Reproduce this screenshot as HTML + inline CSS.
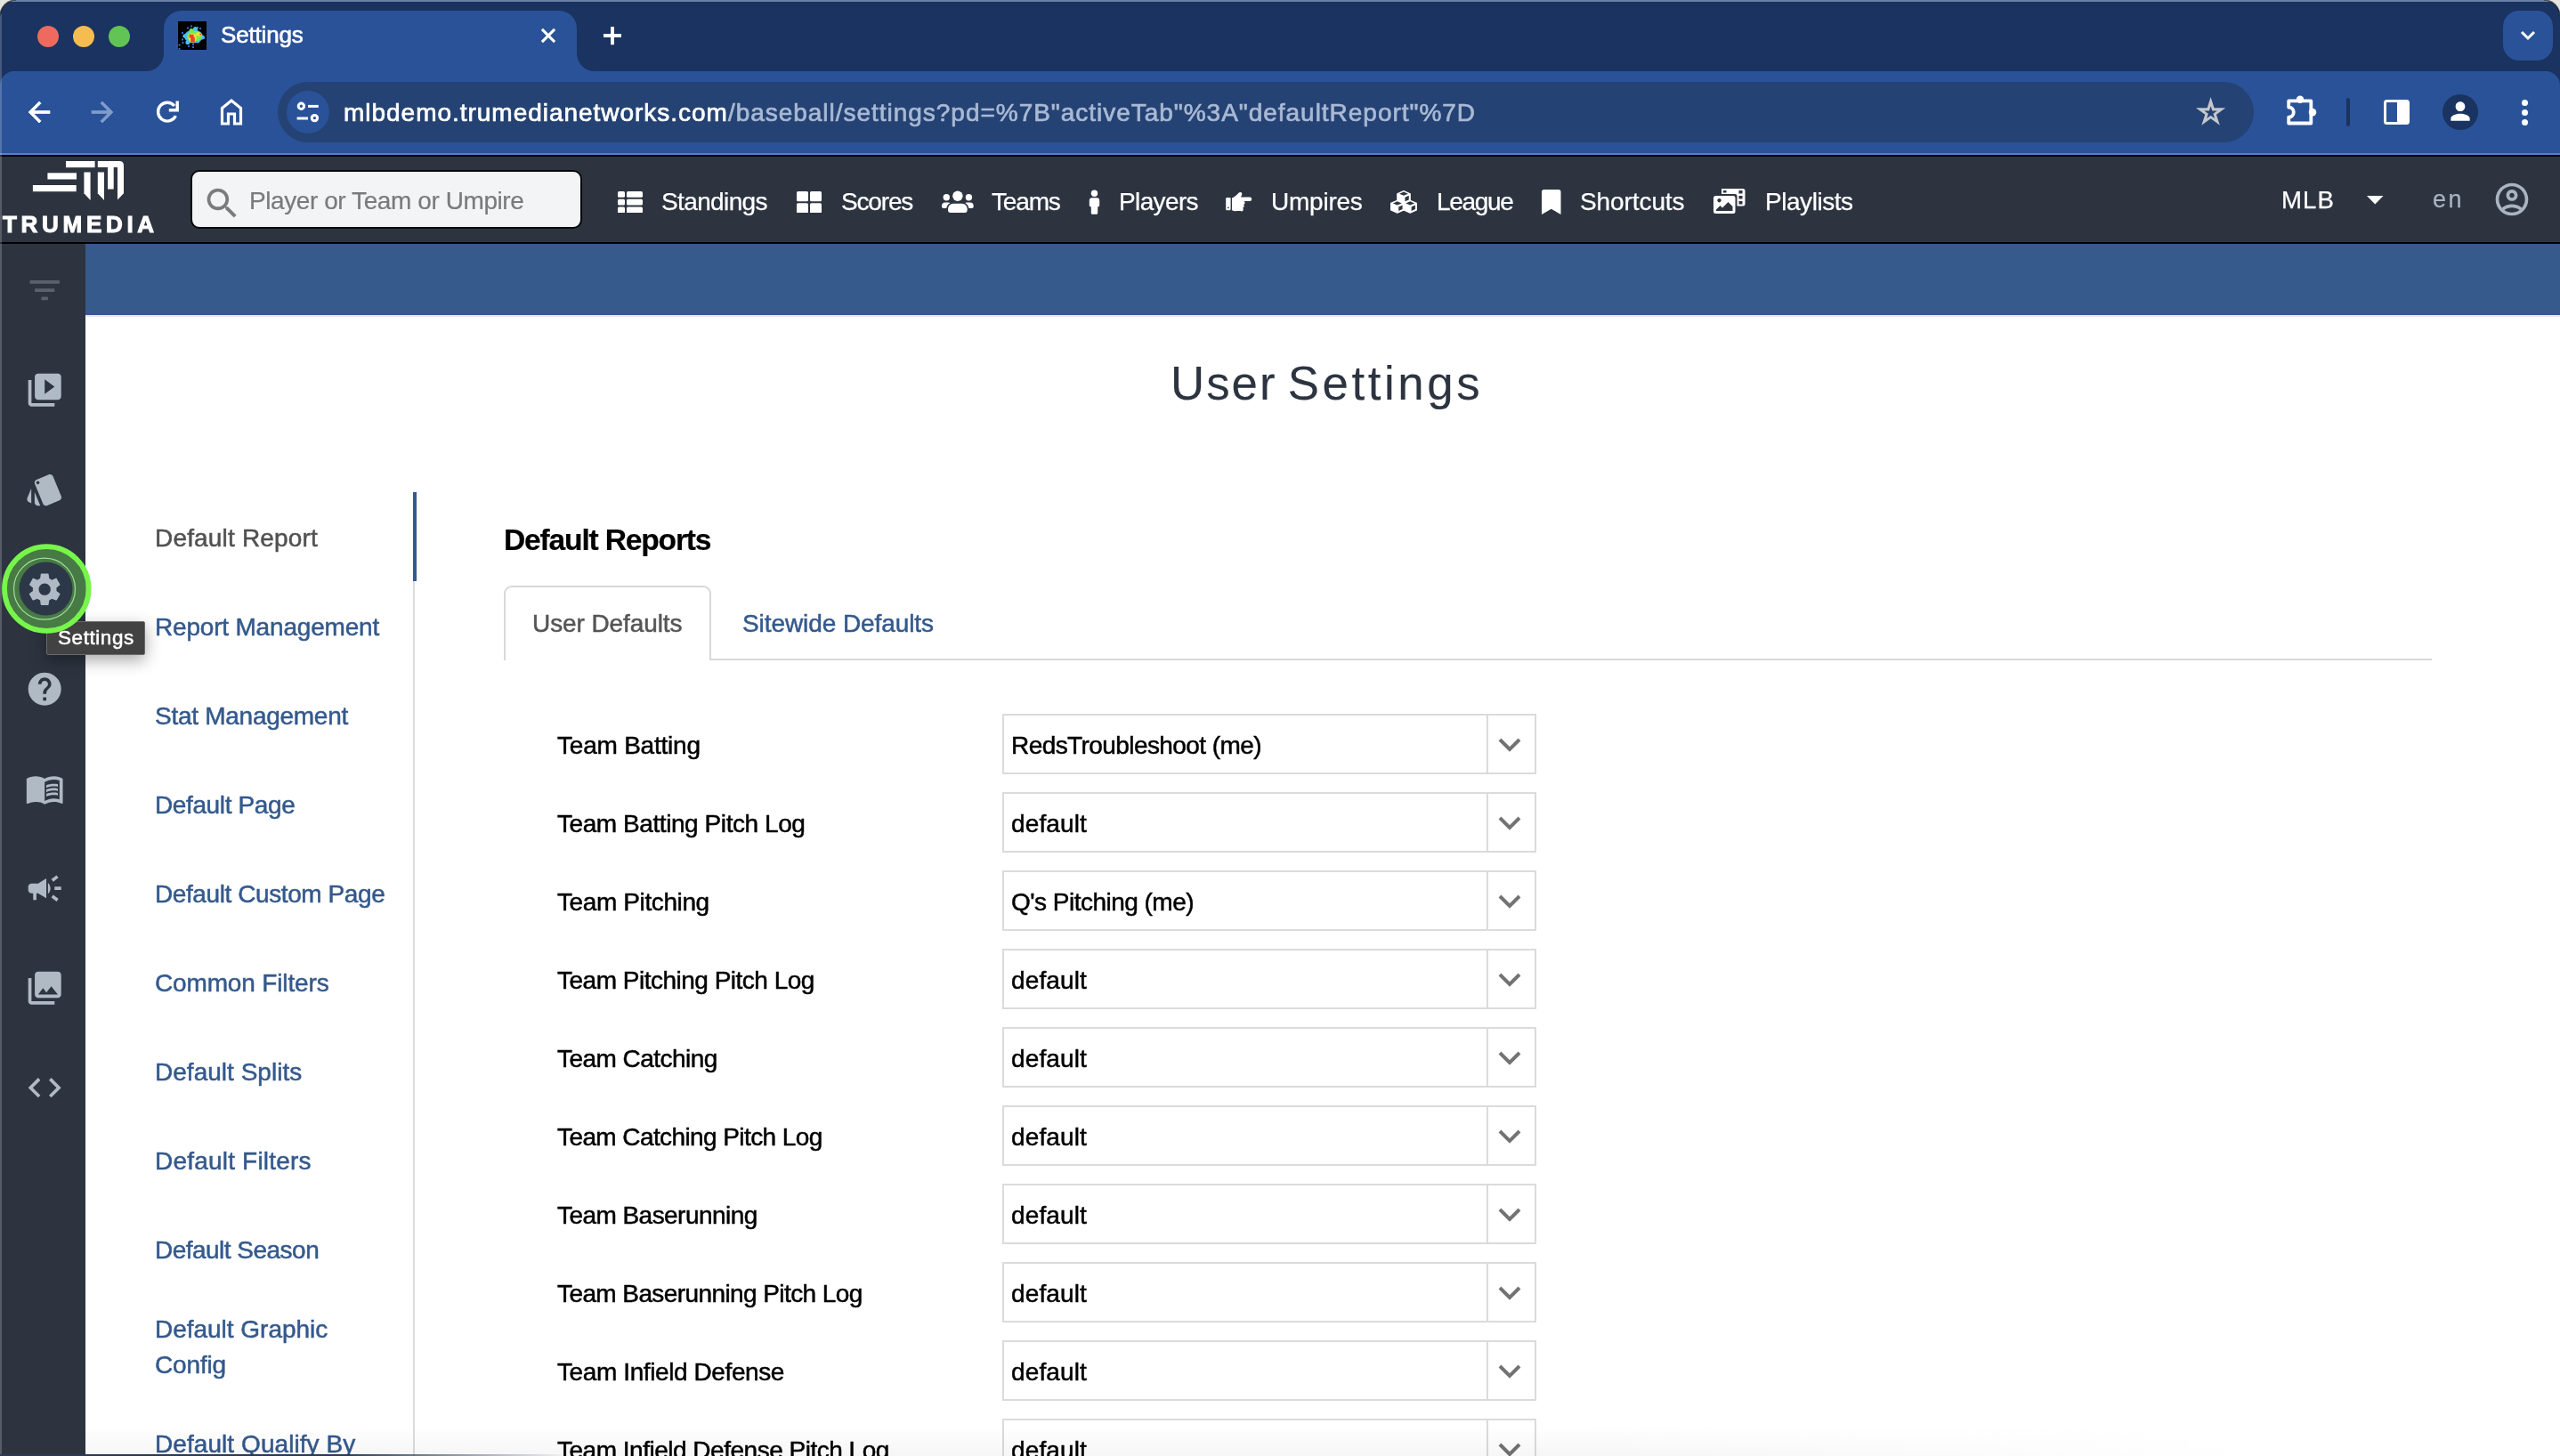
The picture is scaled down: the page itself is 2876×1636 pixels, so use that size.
<!DOCTYPE html>
<html lang="en"><head><meta charset="utf-8"><title>Settings</title>
<style>
html,body{margin:0;padding:0}
body{width:2876px;height:1636px;overflow:hidden;position:relative;background:#fff;font-family:"Liberation Sans",sans-serif}
.a{position:absolute;display:block}
.t{position:absolute;white-space:nowrap;font-family:"Liberation Sans",sans-serif;will-change:transform;-webkit-text-stroke:0.5px}
.sel{position:absolute;left:1126px;width:600px;height:68px;box-sizing:border-box;border:2px solid #dbdbdb;background:#fff}
.sel i{position:absolute;left:542px;top:0;width:2px;height:64px;background:#dbdbdb}
.sel svg{position:absolute;left:552.6px;top:23.8px}
</style></head><body>

<div class="a" id="tabstrip" style="left:0;top:0;width:2876px;height:100px;background:#1a3360"></div>
<div class="a" style="left:0;top:0;width:2876px;height:2px;background:#6a80a6"></div>
<div class="a" id="toolbar" style="left:0;top:80px;width:2876px;height:92px;background:#2a5298;border-radius:16px 16px 0 0"></div>
<svg class="a" style="left:160px;top:12px" width="520" height="70" viewBox="0 0 520 70"><path fill="#2a5298" d="M4 68 A20 20 0 0 0 24 48 V20 A20 20 0 0 1 44 0 H468 A20 20 0 0 1 488 20 V48 A20 20 0 0 0 508 68 V70 H4 Z"/></svg>
<div class="a" style="left:42px;top:29px;width:24px;height:24px;border-radius:50%;background:#ee6a5f"></div>
<div class="a" style="left:82px;top:29px;width:24px;height:24px;border-radius:50%;background:#f5bd4f"></div>
<div class="a" style="left:122px;top:29px;width:24px;height:24px;border-radius:50%;background:#61c454"></div>
<svg class="a" style="left:200px;top:24px" width="32" height="32" viewBox="200 24 32 32"><defs><filter id="fb" x="-20%" y="-20%" width="140%" height="140%"><feGaussianBlur stdDeviation="0.45"/></filter><filter id="fc" x="-50%" y="-50%" width="200%" height="200%"><feGaussianBlur stdDeviation="0.25"/></filter></defs><rect x="200" y="24" width="32" height="32" fill="#000"/><g filter="url(#fc)"><rect x="204.1" y="36.1" width="1.8" height="1.8" fill="#3f83f5"/><rect x="204.1" y="43.6" width="1.8" height="1.8" fill="#3f83f5"/><rect x="204.6" y="47.1" width="1.8" height="1.8" fill="#3f83f5"/><rect x="200.6" y="49.6" width="1.8" height="1.8" fill="#3f83f5"/><rect x="211.1" y="51.1" width="1.8" height="1.8" fill="#3f83f5"/><rect x="216.1" y="49.1" width="1.8" height="1.8" fill="#3f83f5"/><rect x="216.1" y="52.1" width="1.8" height="1.8" fill="#3f83f5"/><rect x="214.1" y="28.6" width="1.8" height="1.8" fill="#3f83f5"/><rect x="210.1" y="30.6" width="1.8" height="1.8" fill="#3f83f5"/><rect x="221.1" y="30.1" width="1.8" height="1.8" fill="#3f83f5"/><rect x="228.1" y="41.6" width="1.8" height="1.8" fill="#3f83f5"/><rect x="222.1" y="45.1" width="1.8" height="1.8" fill="#3f83f5"/><rect x="210.1" y="47.1" width="1.8" height="1.8" fill="#3f83f5"/><rect x="200.6" y="54.1" width="1.8" height="1.8" fill="#3f83f5"/><rect x="224.1" y="31.1" width="1.8" height="1.8" fill="#3f83f5"/></g><g filter="url(#fb)"><ellipse cx="217.5" cy="41" rx="10.5" ry="7.5" fill="#49bcff"/><circle cx="211" cy="47.5" r="2.6" fill="#49bcff"/><circle cx="219.5" cy="32.5" r="2.6" fill="#49bcff"/><circle cx="227.5" cy="42" r="2.4" fill="#49bcff"/><circle cx="222" cy="46" r="2.4" fill="#49bcff"/><circle cx="207.5" cy="40.5" r="2.2" fill="#49bcff"/><ellipse cx="218.5" cy="40.5" rx="8.5" ry="6" fill="#79e84c"/><circle cx="215" cy="34.5" r="2.4" fill="#79e84c"/><ellipse cx="216.2" cy="42.5" rx="4.6" ry="5.2" fill="#e6e63c"/><ellipse cx="223" cy="38.5" rx="3.2" ry="2.2" fill="#e6e63c"/><path d="M212.6 38.8 h5 v3 h1.2 v5.8 h-4.6 v-5 h-1.6 z" fill="#e8442a"/><circle cx="225.2" cy="38.5" r="1" fill="#d8431f"/></g></svg>
<div class="t" style="left:248.4px;top:26.2px;font-size:26px;line-height:26px;color:#fff;letter-spacing:-0.16px;font-weight:normal;-webkit-text-stroke:0.6px">Settings</div>
<svg class="a" style="left:603px;top:27px" width="26" height="26" viewBox="0 0 26 26"><path d="M5.9 5.9 L20.1 20.1 M20.1 5.9 L5.9 20.1" stroke="#fff" stroke-width="3" fill="none"/></svg>
<svg class="a" style="left:672px;top:24px" width="32" height="32" viewBox="0 0 32 32"><path d="M16 5.9 V26.3 M6 16 H26" stroke="#fff" stroke-width="3.8" fill="none"/></svg>
<div class="a" style="left:2812px;top:12px;width:56px;height:56px;border-radius:18px;background:#2a5298"></div>
<svg class="a" style="left:2828px;top:28px" width="24" height="24" viewBox="0 0 24 24"><path d="M5 8 L12 15 L19 8" stroke="#fff" stroke-width="3" fill="none"/></svg>
<svg class="a" style="left:26px;top:108px;overflow:visible;" width="36" height="36" viewBox="0 0 24 24"><path fill="#fff" stroke="#fff" stroke-width="0.5" stroke-linejoin="round" d="M20 11H7.83l5.59-5.59L12 4l-8 8 8 8 1.41-1.41L7.83 13H20v-2z"/></svg>
<svg class="a" style="left:97px;top:108px;overflow:visible;" width="36" height="36" viewBox="0 0 24 24"><path fill="#7f9ccb" stroke="#7f9ccb" stroke-width="0.5" stroke-linejoin="round" d="M12 4l-1.41 1.41L16.17 11H4v2h12.17l-5.58 5.59L12 20l8-8z"/></svg>
<svg class="a" style="left:170px;top:108px" width="36" height="36" viewBox="170 108 36 36"><g stroke="#fff" stroke-width="3.4" fill="none"><path d="M195.97 119 A10.4 10.4 0 1 0 197.4 130.1"/><path d="M199.2 113.4 V123.7 H189.8"/></g></svg>
<svg class="a" style="left:244px;top:108px" width="32" height="34" viewBox="0 0 32 34"><path d="M5.5 31 V13.5 L16 5 L26.5 13.5 V31 H19.5 V20 H12.5 V31 Z" stroke="#fff" stroke-width="3.2" fill="none" stroke-linejoin="miter"/></svg>
<div class="a" style="left:312px;top:92px;width:2220px;height:68px;border-radius:34px;background:#244273"></div>
<div class="a" style="left:322px;top:102px;width:48px;height:48px;border-radius:50%;background:#2a5298"></div>
<svg class="a" style="left:332px;top:112px" width="28" height="28" viewBox="0 0 28 28"><g stroke="#fff" stroke-width="3" fill="none"><circle cx="6.4" cy="7.2" r="3.2"/><path d="M14 7.4 H25.8"/><circle cx="21.4" cy="20.6" r="3.2"/><path d="M1.6 21 H14"/></g></svg>
<div class="t" style="left:385.5px;top:112.9px;font-size:28px;line-height:28px;color:#fff;letter-spacing:0.975px;font-weight:normal;-webkit-text-stroke:0.7px">mlbdemo.trumedianetworks.com<span style="color:#a9b9d4">/baseball/settings?pd=%7B"activeTab"%3A"defaultReport"%7D</span></div>
<svg class="a" style="left:2460px;top:104px" width="48" height="44" viewBox="2460 104 48 44"><path fill="#c3c6cd" fill-rule="evenodd" d="M2483.6 109.1 L2487.53 121.19 L2500.24 121.19 L2489.96 128.67 L2493.89 140.76 L2483.6 133.28 L2473.31 140.76 L2477.24 128.67 L2466.96 121.19 L2479.67 121.19 Z M2483.6 119.2 L2485.31 124.45 L2490.83 124.45 L2486.36 127.7 L2488.07 132.95 L2483.6 129.7 L2479.13 132.95 L2480.84 127.7 L2476.37 124.45 L2481.89 124.45 Z"/></svg>
<svg class="a" style="left:2560px;top:100px" width="50" height="48" viewBox="2560 100 50 48"><path d="M2571.2 120.5 V113.4 H2596.3 V138.5 H2571.2 V131.7 A5.6 5.6 0 0 0 2571.2 120.5 Z" stroke="#fff" stroke-width="3.8" fill="none" stroke-linejoin="round"/><circle cx="2584" cy="111.7" r="4.2" fill="#fff"/><circle cx="2598" cy="126.1" r="4.3" fill="#fff"/></svg>
<div class="a" style="left:2636px;top:110px;width:4px;height:32px;border-radius:2px;background:#1a3360"></div>
<svg class="a" style="left:2676px;top:110px" width="32" height="32" viewBox="0 0 32 32"><rect x="3.5" y="3.5" width="26" height="25" rx="2" stroke="#fff" stroke-width="3" fill="none"/><rect x="17" y="3" width="12" height="26" fill="#fff"/></svg>
<div class="a" style="left:2744px;top:106px;width:40px;height:40px;border-radius:50%;background:#1a3360"></div>
<svg class="a" style="left:2748px;top:109px;overflow:visible;" width="32" height="32" viewBox="0 0 24 24"><path fill="#fff" d="M12 12c2.21 0 4-1.79 4-4s-1.79-4-4-4-4 1.79-4 4 1.79 4 4 4zm0 2c-2.67 0-8 1.34-8 4v2h16v-2c0-2.66-5.33-4-8-4z"/></svg>
<div class="a" style="left:2832.5px;top:111.5px;width:7px;height:7px;border-radius:50%;background:#fff"></div>
<div class="a" style="left:2832.5px;top:122.5px;width:7px;height:7px;border-radius:50%;background:#fff"></div>
<div class="a" style="left:2832.5px;top:133.5px;width:7px;height:7px;border-radius:50%;background:#fff"></div>
<div class="a" style="left:0;top:172px;width:2876px;height:2px;background:#5b82b8"></div>
<div class="a" style="left:0;top:174px;width:2876px;height:2px;background:#000"></div>
<div class="a" style="left:0;top:176px;width:2876px;height:96px;background:#2d3440"></div>
<div class="a" style="left:0;top:272px;width:2876px;height:2px;background:#000"></div>
<svg class="a" style="left:30px;top:176px" width="120" height="56" viewBox="30 176 120 56"><g fill="#fff">
<rect x="74" y="181" width="32.6" height="7.2"/><rect x="53.4" y="194.3" width="32.6" height="7.2"/><rect x="36.9" y="208" width="48.8" height="7.2"/>
<path d="M94.4 193.5 H101.6 V225 L94.4 217.3 Z"/>
<path d="M109.8 181 H134 Q139 181 139 186 V217.3 L132 224.5 V188 H127.7 V212.6 H121 V188 H109.8 Z"/>
<path d="M109.8 193.5 H117 V225 L109.8 217.3 Z"/></g></svg>
<div class="t" style="left:2.8px;top:238.7px;font-size:26px;line-height:26px;color:#fff;letter-spacing:4.7px;font-weight:bold;-webkit-text-stroke:1px #fff">TRUMEDIA</div>
<div class="a" style="left:213.5px;top:190.5px;width:440.5px;height:66.5px;box-sizing:border-box;border:2.5px solid #07080a;border-radius:10px;background:#f3f4f6"></div>
<svg class="a" style="left:227.2px;top:205.5px;overflow:visible;" width="45.2" height="45.2" viewBox="0 0 24 24"><path fill="#7b7b7b" d="M15.5 14h-.79l-.28-.27C15.41 12.59 16 11.11 16 9.5 16 5.91 13.09 3 9.5 3S3 5.91 3 9.5 5.91 16 9.5 16c1.61 0 3.09-.590 4.23-1.57l.27.28v.790l5 4.99L20.49 19l-4.99-5zm-6 0C7.01 14 5 11.99 5 9.5S7.01 5 9.5 5 14 7.01 14 9.5 11.99 14 9.5 14z"/></svg>
<div class="t" style="left:279.6px;top:211.7px;font-size:28px;line-height:28px;color:#7a7a7a;letter-spacing:-0.42px;font-weight:normal;-webkit-text-stroke:0.2px">Player or Team or Umpire</div>
<div class="t" style="left:743.3px;top:213.2px;font-size:28px;line-height:28px;color:#fff;letter-spacing:-0.62px;font-weight:normal;-webkit-text-stroke:0.25px">Standings</div>
<div class="t" style="left:944.8px;top:213.2px;font-size:28px;line-height:28px;color:#fff;letter-spacing:-1.16px;font-weight:normal;-webkit-text-stroke:0.25px">Scores</div>
<div class="t" style="left:1114.4px;top:213.2px;font-size:28px;line-height:28px;color:#fff;letter-spacing:-1.17px;font-weight:normal;-webkit-text-stroke:0.25px">Teams</div>
<div class="t" style="left:1256.5px;top:213.2px;font-size:28px;line-height:28px;color:#fff;letter-spacing:-0.63px;font-weight:normal;-webkit-text-stroke:0.25px">Players</div>
<div class="t" style="left:1428px;top:213.2px;font-size:28px;line-height:28px;color:#fff;letter-spacing:-0.23px;font-weight:normal;-webkit-text-stroke:0.25px">Umpires</div>
<div class="t" style="left:1614px;top:213.2px;font-size:28px;line-height:28px;color:#fff;letter-spacing:-1.34px;font-weight:normal;-webkit-text-stroke:0.25px">League</div>
<div class="t" style="left:1775px;top:213.2px;font-size:28px;line-height:28px;color:#fff;letter-spacing:-0.09px;font-weight:normal;-webkit-text-stroke:0.25px">Shortcuts</div>
<div class="t" style="left:1983.4px;top:213.2px;font-size:28px;line-height:28px;color:#fff;letter-spacing:-0.46px;font-weight:normal;-webkit-text-stroke:0.25px">Playlists</div>
<svg class="a" style="left:694px;top:214.5px" width="28" height="24.5" viewBox="0 0 28 24.5"><g fill="#fff">
<rect x="0" y="0" width="8" height="6.8" rx="1.5"/><rect x="10" y="0" width="18" height="6.8" rx="1.5"/>
<rect x="0" y="8.8" width="8" height="6.8" rx="1.5"/><rect x="10" y="8.8" width="18" height="6.8" rx="1.5"/>
<rect x="0" y="17.6" width="8" height="6.8" rx="1.5"/><rect x="10" y="17.6" width="18" height="6.8" rx="1.5"/></g></svg>
<svg class="a" style="left:895px;top:214.5px" width="28" height="24.5" viewBox="0 0 28 24.5"><g fill="#fff">
<rect x="0" y="0" width="13" height="11.2" rx="1.5"/><rect x="15" y="0" width="13" height="11.2" rx="1.5"/>
<rect x="0" y="13.2" width="13" height="11.2" rx="1.5"/><rect x="15" y="13.2" width="13" height="11.2" rx="1.5"/></g></svg>
<svg class="a" style="left:1056px;top:212px" width="40" height="30" viewBox="1056 212 40 30"><g fill="#fff">
<circle cx="1075.9" cy="220.3" r="5.7"/>
<path d="M1065 236 V234.8 A6 6 0 0 1 1071 228.8 H1080.7 A6 6 0 0 1 1086.7 234.8 V236 A2.9 2.9 0 0 1 1083.8 238.9 H1067.9 A2.9 2.9 0 0 1 1065 236 Z"/>
<circle cx="1063.3" cy="221.7" r="3.7"/><circle cx="1088.4" cy="221.7" r="3.7"/>
<path d="M1058 232.3 V231.6 A4 4 0 0 1 1062 227.6 H1065.5 A5 5 0 0 1 1067.6 228.1 A8 8 0 0 0 1063.3 234.1 H1059.8 A1.8 1.8 0 0 1 1058 232.3 Z"/>
<path d="M1093.7 232.3 V231.6 A4 4 0 0 0 1089.7 227.6 H1086.2 A5 5 0 0 0 1084.1 228.1 A8 8 0 0 1 1088.4 234.1 H1091.9 A1.8 1.8 0 0 0 1093.7 232.3 Z"/></g></svg>
<svg class="a" style="left:1220px;top:210px" width="20" height="34" viewBox="1220 210 20 34"><g fill="#fff">
<circle cx="1229.5" cy="217.3" r="3.7"/>
<path d="M1227 222.2 H1232 A3.2 3.2 0 0 1 1235.2 225.4 V231 A1.3 1.3 0 0 1 1233.9 232.3 H1233.2 V239.4 A1.3 1.3 0 0 1 1231.9 240.7 H1227.1 A1.3 1.3 0 0 1 1225.8 239.4 V232.3 H1225.1 A1.3 1.3 0 0 1 1223.8 231 V225.4 A3.2 3.2 0 0 1 1227 222.2 Z"/></g></svg>
<svg class="a" style="left:1376px;top:214px" width="32" height="26" viewBox="1376 214 32 26"><g fill="#fff">
<rect x="1377.2" y="222" width="5.4" height="14.2" rx="1.2"/>
<path d="M1384 222.5 C1387 221.5 1389.5 219 1391.5 216.8 C1393 215.3 1395.2 215.8 1395.3 217.8 C1395.4 219.3 1394.6 220.5 1393.8 221.6 H1404 a2.25 2.25 0 0 1 0 4.5 H1397.5 a2.1 2.1 0 0 1 -0.6 3.9 a2 2 0 0 1 -1 3.6 a2 2 0 0 1 -2.2 3.4 H1389 C1387 237.8 1385.8 236.8 1384 236.2 Z"/></g><circle cx="1379.9" cy="233.3" r="0.9" fill="#2d3440"/></svg>
<svg class="a" style="left:1560px;top:212px" width="34" height="30" viewBox="1560 212 34 30"><polygon points="1577,214.6 1584.2,217.7 1584.2,225.3 1577,228.4 1569.8,225.3 1569.8,217.7" fill="#fff" stroke="#fff" stroke-width="1.2" stroke-linejoin="round"/><polygon points="1577,215.59 1581.9,217.7 1577,219.81 1572.1,217.7" fill="#2d3440"/><polygon points="1578.44,221.7 1582.76,219.84 1582.76,224.4 1578.44,226.26" fill="#2d3440"/><polygon points="1569.8,225.3 1577,228.4 1577,236 1569.8,239.1 1562.6,236 1562.6,228.4" fill="#fff" stroke="#fff" stroke-width="1.2" stroke-linejoin="round"/><polygon points="1569.8,226.29 1574.7,228.4 1569.8,230.51 1564.9,228.4" fill="#2d3440"/><polygon points="1571.24,232.4 1575.56,230.54 1575.56,235.1 1571.24,236.96" fill="#2d3440"/><polygon points="1584.2,225.3 1591.4,228.4 1591.4,236 1584.2,239.1 1577,236 1577,228.4" fill="#fff" stroke="#fff" stroke-width="1.2" stroke-linejoin="round"/><polygon points="1584.2,226.29 1589.1,228.4 1584.2,230.51 1579.3,228.4" fill="#2d3440"/><polygon points="1585.64,232.4 1589.96,230.54 1589.96,235.1 1585.64,236.96" fill="#2d3440"/></svg>
<svg class="a" style="left:1732px;top:212.6px" width="21.5" height="28" viewBox="0 0 21.5 28"><path fill="#fff" d="M0 28 V2.6 A2.6 2.6 0 0 1 2.6 0 H18.9 A2.6 2.6 0 0 1 21.5 2.6 V28 L10.75 21.7 Z"/></svg>
<svg class="a" style="left:1925px;top:212.4px" width="35.5" height="28" viewBox="0 0 35.5 28"><g fill="#fff">
<path d="M9 0 H33 a2.5 2.5 0 0 1 2.5 2.5 V17 a2.5 2.5 0 0 1 -2.5 2.5 H26.5 V8.5 a2.5 2.5 0 0 0 -2.5 -2.5 H9 V0 Z M28.5 2 h4 v3.5 h-4 Z M28.5 8 h4 v3.5 h-4 Z M28.5 14 h4 v3.5 h-4 Z M11 2 h3.5 v2.5 H11 Z" fill-rule="evenodd"/>
<path d="M2.5 8 H22 a2.5 2.5 0 0 1 2.5 2.5 V25.5 a2.5 2.5 0 0 1 -2.5 2.5 H2.5 a2.5 2.5 0 0 1 -2.5 -2.5 V10.5 a2.5 2.5 0 0 1 2.5 -2.5 Z M3 25 H21.5 V20 L16.5 15 L10 21.5 L7.5 19 L3 23.5 Z M6.5 11 a2.2 2.2 0 1 0 0.01 0 Z" fill-rule="evenodd"/></g></svg>
<div class="t" style="left:2563.2px;top:210.8px;font-size:27.6px;line-height:27.6px;color:#fff;letter-spacing:1.1px;font-weight:normal;-webkit-text-stroke:0.25px">MLB</div>
<svg class="a" style="left:2659px;top:220px" width="18.5" height="9.5" viewBox="0 0 18.5 9.5"><path fill="#fff" d="M0 0 H18.5 L9.25 9.5 Z"/></svg>
<div class="t" style="left:2733.4px;top:211.3px;font-size:27px;line-height:27px;color:#a9b4c0;letter-spacing:2.4px;font-weight:normal;-webkit-text-stroke:0.25px">en</div>
<svg class="a" style="left:2800.2px;top:202px;overflow:visible;" width="44" height="44" viewBox="0 0 24 24"><path fill="#a9b4c0" d="M12 2C6.48 2 2 6.48 2 12s4.48 10 10 10 10-4.48 10-10S17.52 2 12 2zM7.35 18.5C8.66 17.56 10.26 17 12 17s3.34.56 4.65 1.5C15.34 19.44 13.74 20 12 20s-3.34-.560-4.65-1.5zm10.79-1.38C16.45 15.8 14.32 15 12 15s-4.45.800-6.14 2.12C4.7 15.73 4 13.95 4 12c0-4.42 3.58-8 8-8s8 3.58 8 8c0 1.95-.700 3.73-1.86 5.12zM12 6c-1.93 0-3.5 1.57-3.5 3.5S10.07 13 12 13s3.5-1.57 3.5-3.5S13.93 6 12 6zm0 5c-.830 0-1.5-.670-1.5-1.5S11.17 8 12 8s1.5.670 1.5 1.5S12.83 11 12 11z"/></svg>
<div class="a" style="left:0;top:274px;width:96px;height:1362px;background:#2d3440"></div>
<div class="a" style="left:96px;top:274px;width:2780px;height:80px;background:#375a8c"></div>
<div class="a" style="left:96px;top:354px;width:2780px;height:2px;background:#e9e9ec"></div>
<div class="a" style="left:0;top:16px;width:2px;height:1620px;background:rgba(255,255,255,.2)"></div>
<svg class="a" style="left:27.6px;top:303.6px;overflow:visible;" width="44.4" height="44.4" viewBox="0 0 24 24"><path fill="#59616d" d="M10 18h4v-2h-4v2zM3 6v2h18V6H3zm3 7h12v-2H6v2z"/></svg>
<svg class="a" style="left:27.8px;top:415.8px;overflow:visible;" width="44.4" height="44.4" viewBox="0 0 24 24"><path fill="#b0bac5" d="M4 6H2v14c0 1.1.9 2 2 2h14v-2H4V6zm16-4H8c-1.1 0-2 .9-2 2v12c0 1.1.9 2 2 2h12c1.1 0 2-.9 2-2V4c0-1.1-.9-2-2-2zm-8 12.5v-9l6 4.5-6 4.5z"/></svg>
<svg class="a" style="left:27.8px;top:527.8px;overflow:visible;" width="44.4" height="44.4" viewBox="0 0 24 24"><path fill="#b0bac5" d="M2.53 19.65l1.34.56v-9.03l-2.43 5.86c-.41 1.02.08 2.19 1.09 2.61zm19.5-3.7L17.07 3.98c-.31-.75-1.04-1.21-1.81-1.23-.26 0-.53.04-.79.15L7.1 5.95c-.75.31-1.21 1.03-1.23 1.8-.01.27.04.54.15.8l4.96 11.97c.31.76 1.05 1.22 1.83 1.23.26 0 .52-.05.77-.15l7.36-3.05c1.02-.42 1.51-1.59 1.09-2.6zM7.88 8.75c-.55 0-1-.45-1-1s.45-1 1-1 1 .45 1 1-.45 1-1 1zm-2 11c0 1.1.9 2 2 2h1.45l-3.45-8.34v6.34z"/></svg>
<svg class="a" style="left:27.8px;top:752.3px;overflow:visible;" width="44.4" height="44.4" viewBox="0 0 24 24"><path fill="#b0bac5" d="M12 2C6.48 2 2 6.48 2 12s4.48 10 10 10 10-4.48 10-10S17.52 2 12 2zm1 17h-2v-2h2v2zm2.07-7.75l-.9.92C13.45 12.9 13 13.5 13 15h-2v-.5c0-1.1.45-2.1 1.17-2.83l1.24-1.26c.37-.36.59-.86.59-1.41 0-1.1-.9-2-2-2s-2 .9-2 2H8c0-2.21 1.79-4 4-4s4 1.79 4 4c0 .88-.36 1.68-.93 2.25z"/></svg>
<svg class="a" style="left:27.8px;top:863.8px;overflow:visible;" width="44.4" height="44.4" viewBox="0 0 24 24"><path fill="#b0bac5" d="M21 5c-1.11-.35-2.33-.5-3.5-.5-1.95 0-4.05.4-5.5 1.5-1.45-1.1-3.55-1.5-5.5-1.5S2.45 4.9 1 6v14.65c0 .25.25.5.5.5.1 0 .15-.05.25-.05C3.1 20.45 5.05 20 6.5 20c1.95 0 4.05.4 5.5 1.5 1.35-.85 3.8-1.5 5.5-1.5 1.65 0 3.35.3 4.75 1.05.1.05.15.05.25.05.25 0 .5-.25.5-.5V6c-.6-.45-1.25-.75-2-1zm0 13.5c-1.1-.35-2.3-.5-3.5-.5-1.7 0-4.15.65-5.5 1.5V8c1.35-.85 3.8-1.5 5.5-1.5 1.2 0 2.4.15 3.5.5v11.5zM17.5 10.5c.88 0 1.73.09 2.5.26V9.24c-.79-.15-1.64-.24-2.5-.24-1.7 0-3.24.29-4.5.83v1.66c1.13-.64 2.7-.99 4.5-.99zM13 12.49v1.66c1.13-.64 2.7-.99 4.5-.99.88 0 1.73.09 2.5.26V11.9c-.79-.15-1.64-.24-2.5-.24-1.7 0-3.24.3-4.5.83zM17.5 14.33c-1.7 0-3.24.29-4.5.83v1.66c1.13-.64 2.7-.99 4.5-.99.88 0 1.73.09 2.5.26v-1.52c-.79-.16-1.64-.24-2.5-.24z"/></svg>
<svg class="a" style="left:27.8px;top:975.8px;overflow:visible;" width="44.4" height="44.4" viewBox="0 0 24 24"><path fill="#b0bac5" d="M18 11v2h4v-2h-4zm-2 6.61c.96.71 2.21 1.65 3.2 2.39.4-.53.8-1.07 1.2-1.6-.99-.74-2.24-1.68-3.2-2.4-.4.54-.8 1.08-1.2 1.61zM20.4 5.6c-.4-.53-.8-1.07-1.2-1.6-.99.74-2.24 1.68-3.2 2.4.4.53.8 1.07 1.2 1.6.96-.72 2.21-1.65 3.2-2.4zM4 9c-1.1 0-2 .9-2 2v2c0 1.1.9 2 2 2h1v4h2v-4h1l5 3V6L8 9H4zm11.5 3c0-1.33-.58-2.53-1.5-3.35v6.69c.92-.81 1.5-2.01 1.5-3.34z"/></svg>
<svg class="a" style="left:27.8px;top:1088.1px;overflow:visible;" width="44.4" height="44.4" viewBox="0 0 24 24"><path fill="#b0bac5" d="M22 16V4c0-1.1-.9-2-2-2H8c-1.1 0-2 .9-2 2v12c0 1.1.9 2 2 2h12c1.1 0 2-.9 2-2zm-11-4l2.03 2.71L16 11l4 5H8l3-4zM2 6v14c0 1.1.9 2 2 2h14v-2H4V6H2z"/></svg>
<svg class="a" style="left:27.8px;top:1199.8px;overflow:visible;" width="44.4" height="44.4" viewBox="0 0 24 24"><path fill="#b0bac5" d="M9.4 16.6L4.8 12l4.6-4.6L8 6l-6 6 6 6 1.4-1.4zm5.2 0l4.6-4.6-4.6-4.6L16 6l6 6-6 6-1.4-1.4z"/></svg>
<div class="t" style="left:1315px;top:404.9px;font-size:52.8px;line-height:52.8px;color:#2d3440;letter-spacing:2px;font-weight:normal;-webkit-text-stroke:0.1px;word-spacing:-4.5px">User <span style="letter-spacing:3.6px">Settings</span></div>
<div class="a" style="left:464px;top:553px;width:2px;height:1083px;background:#dcdcdc"></div>
<div class="a" style="left:464px;top:553px;width:4px;height:100px;background:#34598c"></div>
<div class="t" style="left:174.2px;top:590.9px;font-size:28px;line-height:28px;color:#515151;letter-spacing:0.18px;font-weight:normal;">Default Report</div>
<div class="t" style="left:174.2px;top:690.9px;font-size:28px;line-height:28px;color:#34598c;letter-spacing:-0.19px;font-weight:normal;">Report Management</div>
<div class="t" style="left:174.2px;top:790.9px;font-size:28px;line-height:28px;color:#34598c;letter-spacing:-0.27px;font-weight:normal;">Stat Management</div>
<div class="t" style="left:174.2px;top:890.9px;font-size:28px;line-height:28px;color:#34598c;letter-spacing:-0.38px;font-weight:normal;">Default Page</div>
<div class="t" style="left:174.2px;top:990.9px;font-size:28px;line-height:28px;color:#34598c;letter-spacing:-0.41px;font-weight:normal;">Default Custom Page</div>
<div class="t" style="left:174.2px;top:1090.9px;font-size:28px;line-height:28px;color:#34598c;letter-spacing:-0.15px;font-weight:normal;">Common Filters</div>
<div class="t" style="left:174.2px;top:1190.9px;font-size:28px;line-height:28px;color:#34598c;letter-spacing:0.02px;font-weight:normal;">Default Splits</div>
<div class="t" style="left:174.2px;top:1290.9px;font-size:28px;line-height:28px;color:#34598c;letter-spacing:0.2px;font-weight:normal;">Default Filters</div>
<div class="t" style="left:174.2px;top:1390.9px;font-size:28px;line-height:28px;color:#34598c;letter-spacing:-0.52px;font-weight:normal;">Default Season</div>
<div class="t" style="left:174.2px;top:1480.1px;font-size:28px;line-height:28px;color:#34598c;letter-spacing:-0.02px;font-weight:normal;">Default Graphic</div>
<div class="t" style="left:174.2px;top:1520.2px;font-size:28px;line-height:28px;color:#34598c;letter-spacing:-0.16px;font-weight:normal;">Config</div>
<div class="t" style="left:174.2px;top:1608.7px;font-size:28px;line-height:28px;color:#34598c;letter-spacing:0.07px;font-weight:normal;">Default Qualify By</div>
<div class="t" style="left:566px;top:590.2px;font-size:33.6px;line-height:33.6px;color:#000;letter-spacing:-1.18px;font-weight:bold;-webkit-text-stroke:0.2px">Default Reports</div>
<div class="a" style="left:566px;top:740px;width:2166px;height:2px;background:#d8d8d8"></div>
<div class="a" style="left:566px;top:658px;width:233px;height:84px;box-sizing:border-box;border:2px solid #d8d8d8;border-bottom:none;border-radius:9px 9px 0 0;background:#fff"></div>
<div class="t" style="left:598.4px;top:687.1px;font-size:28px;line-height:28px;color:#555;letter-spacing:-0.09px;font-weight:normal;">User Defaults</div>
<div class="t" style="left:834.4px;top:687.1px;font-size:28px;line-height:28px;color:#34598c;letter-spacing:-0.08px;font-weight:normal;">Sitewide Defaults</div>
<div class="t" style="left:625.8px;top:823.6px;font-size:28px;line-height:28px;color:#000;letter-spacing:-0.22px;font-weight:normal;">Team Batting</div>
<div class="sel" style="top:802px"><i></i><svg width="30" height="18" viewBox="0 0 30 18"><path d="M4 3 L15 14 L26 3" stroke="#737373" stroke-width="4" fill="none"/></svg></div>
<div class="t" style="left:1136px;top:823.6px;font-size:28px;line-height:28px;color:#000;letter-spacing:-0.58px;font-weight:normal;">RedsTroubleshoot (me)</div>
<div class="t" style="left:625.8px;top:911.6px;font-size:28px;line-height:28px;color:#000;letter-spacing:-0.43px;font-weight:normal;">Team Batting Pitch Log</div>
<div class="sel" style="top:890px"><i></i><svg width="30" height="18" viewBox="0 0 30 18"><path d="M4 3 L15 14 L26 3" stroke="#737373" stroke-width="4" fill="none"/></svg></div>
<div class="t" style="left:1136px;top:911.6px;font-size:28px;line-height:28px;color:#000;letter-spacing:0.13px;font-weight:normal;">default</div>
<div class="t" style="left:625.8px;top:999.6px;font-size:28px;line-height:28px;color:#000;letter-spacing:-0.39px;font-weight:normal;">Team Pitching</div>
<div class="sel" style="top:978px"><i></i><svg width="30" height="18" viewBox="0 0 30 18"><path d="M4 3 L15 14 L26 3" stroke="#737373" stroke-width="4" fill="none"/></svg></div>
<div class="t" style="left:1136px;top:999.6px;font-size:28px;line-height:28px;color:#000;letter-spacing:-0.52px;font-weight:normal;">Q's Pitching (me)</div>
<div class="t" style="left:625.8px;top:1087.6px;font-size:28px;line-height:28px;color:#000;letter-spacing:-0.5px;font-weight:normal;">Team Pitching Pitch Log</div>
<div class="sel" style="top:1066px"><i></i><svg width="30" height="18" viewBox="0 0 30 18"><path d="M4 3 L15 14 L26 3" stroke="#737373" stroke-width="4" fill="none"/></svg></div>
<div class="t" style="left:1136px;top:1087.6px;font-size:28px;line-height:28px;color:#000;letter-spacing:0.13px;font-weight:normal;">default</div>
<div class="t" style="left:625.8px;top:1175.6px;font-size:28px;line-height:28px;color:#000;letter-spacing:-0.54px;font-weight:normal;">Team Catching</div>
<div class="sel" style="top:1154px"><i></i><svg width="30" height="18" viewBox="0 0 30 18"><path d="M4 3 L15 14 L26 3" stroke="#737373" stroke-width="4" fill="none"/></svg></div>
<div class="t" style="left:1136px;top:1175.6px;font-size:28px;line-height:28px;color:#000;letter-spacing:0.13px;font-weight:normal;">default</div>
<div class="t" style="left:625.8px;top:1263.6px;font-size:28px;line-height:28px;color:#000;letter-spacing:-0.59px;font-weight:normal;">Team Catching Pitch Log</div>
<div class="sel" style="top:1242px"><i></i><svg width="30" height="18" viewBox="0 0 30 18"><path d="M4 3 L15 14 L26 3" stroke="#737373" stroke-width="4" fill="none"/></svg></div>
<div class="t" style="left:1136px;top:1263.6px;font-size:28px;line-height:28px;color:#000;letter-spacing:0.13px;font-weight:normal;">default</div>
<div class="t" style="left:625.8px;top:1351.6px;font-size:28px;line-height:28px;color:#000;letter-spacing:-0.55px;font-weight:normal;">Team Baserunning</div>
<div class="sel" style="top:1330px"><i></i><svg width="30" height="18" viewBox="0 0 30 18"><path d="M4 3 L15 14 L26 3" stroke="#737373" stroke-width="4" fill="none"/></svg></div>
<div class="t" style="left:1136px;top:1351.6px;font-size:28px;line-height:28px;color:#000;letter-spacing:0.13px;font-weight:normal;">default</div>
<div class="t" style="left:625.8px;top:1439.6px;font-size:28px;line-height:28px;color:#000;letter-spacing:-0.59px;font-weight:normal;">Team Baserunning Pitch Log</div>
<div class="sel" style="top:1418px"><i></i><svg width="30" height="18" viewBox="0 0 30 18"><path d="M4 3 L15 14 L26 3" stroke="#737373" stroke-width="4" fill="none"/></svg></div>
<div class="t" style="left:1136px;top:1439.6px;font-size:28px;line-height:28px;color:#000;letter-spacing:0.13px;font-weight:normal;">default</div>
<div class="t" style="left:625.8px;top:1527.6px;font-size:28px;line-height:28px;color:#000;letter-spacing:-0.4px;font-weight:normal;">Team Infield Defense</div>
<div class="sel" style="top:1506px"><i></i><svg width="30" height="18" viewBox="0 0 30 18"><path d="M4 3 L15 14 L26 3" stroke="#737373" stroke-width="4" fill="none"/></svg></div>
<div class="t" style="left:1136px;top:1527.6px;font-size:28px;line-height:28px;color:#000;letter-spacing:0.13px;font-weight:normal;">default</div>
<div class="t" style="left:625.8px;top:1615.6px;font-size:28px;line-height:28px;color:#000;letter-spacing:-0.49px;font-weight:normal;">Team Infield Defense Pitch Log</div>
<div class="sel" style="top:1594px"><i></i><svg width="30" height="18" viewBox="0 0 30 18"><path d="M4 3 L15 14 L26 3" stroke="#737373" stroke-width="4" fill="none"/></svg></div>
<div class="t" style="left:1136px;top:1615.6px;font-size:28px;line-height:28px;color:#000;letter-spacing:0.13px;font-weight:normal;">default</div>
<div class="a" style="left:52px;top:698px;width:110.5px;height:38px;box-sizing:border-box;background:#424242;border:1px solid #6a6a6a;border-radius:2px;box-shadow:0 6px 18px rgba(0,0,0,.35)"></div>
<div class="t" style="left:64.5px;top:705.5px;font-size:22.5px;line-height:22.5px;color:#fff;letter-spacing:0.56px;font-weight:normal;">Settings</div>
<svg class="a" style="left:0;top:606px" width="110" height="112" viewBox="0 606 110 112">
<circle cx="52.3" cy="661.5" r="47" fill="#4a8044" fill-opacity=".92"/>
<circle cx="51.5" cy="661.5" r="30" fill="#2c3848"/>
<circle cx="52.3" cy="661.5" r="47.3" fill="none" stroke="#77f54b" stroke-width="5.8"/>
<circle cx="50" cy="661.7" r="34.5" fill="none" stroke="#a6e0a2" stroke-width="1.2"/></svg>
<svg class="a" style="left:27.8px;top:639.8px;overflow:visible;" width="44.4" height="44.4" viewBox="0 0 24 24"><path fill="#b0bac5" d="M19.14 12.94c.04-.3.06-.61.06-.94 0-.32-.02-.64-.07-.94l2.03-1.58c.18-.14.23-.41.12-.61l-1.92-3.32c-.12-.22-.37-.29-.59-.22l-2.39.96c-.5-.38-1.03-.7-1.62-.94l-.36-2.54c-.04-.24-.24-.41-.48-.41h-3.84c-.24 0-.43.17-.47.41l-.36 2.54c-.59.24-1.13.57-1.62.94l-2.39-.96c-.22-.08-.47 0-.59.22L2.74 8.87c-.12.21-.08.47.12.61l2.03 1.58c-.05.3-.09.63-.09.94s.02.64.07.94l-2.03 1.58c-.18.14-.23.41-.12.61l1.92 3.32c.12.22.37.29.59.22l2.39-.96c.5.38 1.03.7 1.62.94l.36 2.54c.05.24.24.41.48.41h3.84c.24 0 .44-.17.47-.41l.36-2.54c.59-.24 1.13-.56 1.62-.94l2.39.96c.22.08.47 0 .59-.22l1.92-3.32c.12-.22.07-.47-.12-.61l-2.01-1.58zM12 15.6c-1.98 0-3.6-1.62-3.6-3.6s1.62-3.6 3.6-3.6 3.6 1.62 3.6 3.6-1.62 3.6-3.6 3.6z"/></svg>
<div class="a" style="left:96px;top:1602px;width:2780px;height:34px;background:linear-gradient(to right,rgba(255,255,255,0) 61%,#fff 88%),linear-gradient(to bottom,rgba(0,0,0,0),rgba(0,0,0,.035))"></div>
<div class="a" style="left:0;top:1634px;width:640px;height:2px;background:linear-gradient(to right,#2b3a55 0,#2b3a55 60%,rgba(43,58,85,0))"></div>
<svg class="a" style="left:0;top:0" width="18" height="18" viewBox="0 0 18 18"><path d="M0 0 H18 A18 18 0 0 0 0 18 Z" fill="#e6e4de"/><path d="M0 18 A18 18 0 0 1 18 0" stroke="#1a1a1a" stroke-width="1.5" fill="none" opacity=".6"/></svg>
<svg class="a" style="left:2858px;top:0" width="18" height="18" viewBox="0 0 18 18"><path d="M18 0 H0 A18 18 0 0 1 18 18 Z" fill="#e6e4de"/><path d="M18 18 A18 18 0 0 0 0 0" stroke="#1a1a1a" stroke-width="1.5" fill="none" opacity=".6"/></svg>
</body></html>
